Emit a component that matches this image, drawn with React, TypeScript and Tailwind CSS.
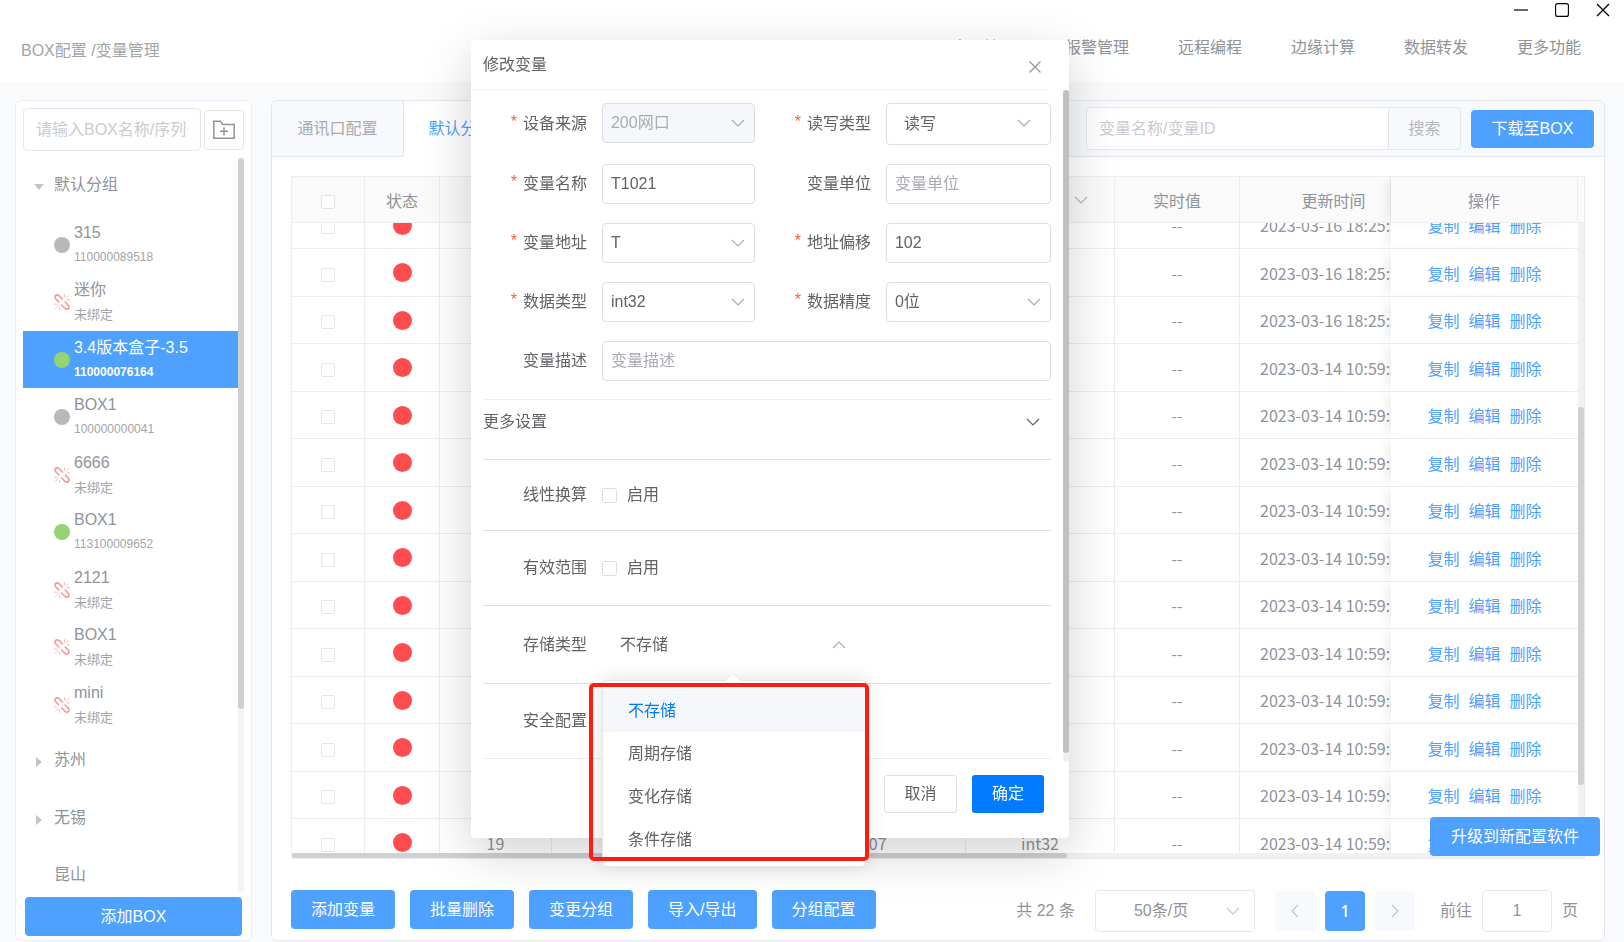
import { useLayoutEffect, useRef } from "react";

type IconProps = { className?: string };

function Chevron({ className = "" }: IconProps) {
  return (
    <svg viewBox="0 0 14 8" className={`h-2 w-3.5 pointer-events-none ${className}`} fill="none" stroke="currentColor" strokeWidth="1.2" aria-hidden="true">
      <path d="M1 1l6 6 6-6" />
    </svg>
  );
}

function FolderPlus() {
  return (
    <svg viewBox="0 0 24 20" className="h-5 w-6" fill="none" stroke="#909399" strokeWidth="1.5" aria-hidden="true">
      <path d="M1.8 18.2V1.2h6.6l2.4 3.2h11.4v13.8z" />
      <path d="M12 7.2v8M8 11.2h8" />
    </svg>
  );
}

function BrokenLink() {
  return (
    <svg viewBox="0 0 16 16" className="h-4 w-4" fill="none" stroke="#f79c9c" strokeLinecap="round" strokeLinejoin="round" aria-hidden="true">
      <path strokeWidth="1.7" d="M4.8 8L2 5.2C.6 3.8.7 2.400 1.700 1.500 2.700.7 4.200.7 5.300 1.800L8.400 5" />
      <path strokeWidth="1.7" d="M11.200 8L14 10.800c1.400 1.400 1.300 2.800.3 3.700-1 .8-2.500.8-3.600-.3L7.600 11" />
      <path strokeWidth="0.9" opacity="0.8" d="M10.500.6v2.500M14.600 1.700l-2.300 2.400M15.500 5.800h-2.300M.6 10.200h2.300M1.500 14.300l2.300-2.400M5.500 15.400v-2.300" />
    </svg>
  );
}

type Status = "off" | "on" | "unbound";
const boxes: { name: string; id: string; status: Status; active?: boolean }[] = [
  { name: "315", id: "110000089518", status: "off" },
  { name: "迷你", id: "未绑定", status: "unbound" },
  { name: "3.4版本盒子-3.5", id: "110000076164", status: "on", active: true },
  { name: "BOX1", id: "100000000041", status: "off" },
  { name: "6666", id: "未绑定", status: "unbound" },
  { name: "BOX1", id: "113100009652", status: "on" },
  { name: "2121", id: "未绑定", status: "unbound" },
  { name: "BOX1", id: "未绑定", status: "unbound" },
  { name: "mini", id: "未绑定", status: "unbound" },
];

function StatusMark({ status }: { status: Status }) {
  if (status === "unbound") return <BrokenLink />;
  return <span className={`block size-4 rounded-full ${status === "on" ? "bg-[#95d475]" : "bg-[#b8b8b8]"}`} />;
}

function Group({ name, open, leaf }: { name: string; open?: boolean; leaf?: boolean }) {
  return (
    <li className="flex h-[57px] items-center pb-[3px] odd:mb-px">
      <span className="flex w-[31px] justify-center pt-1">
        {!leaf && (
          <svg viewBox="0 0 10 10" className={`size-2.5 ${open ? "" : "-rotate-90"}`} fill="#c0c4cc" aria-hidden="true">
            <path d="M0 2h10L5 8z" />
          </svg>
        )}
      </span>
      <span>{name}</span>
    </li>
  );
}

function Sidebar() {
  return (
    <aside className="flex w-[237px] shrink-0 flex-col rounded-md border border-[#ebeef5] bg-white px-[7px] pt-[7px] pb-1">
      <div className="flex items-center gap-[3px]">
        <input
          aria-label="BOX名称"
          placeholder="请输入BOX名称/序列号"
          className="h-[43px] min-w-0 flex-1 rounded border border-[#e4e7ed] pl-3 pr-3 placeholder:text-[#c8cbd1]"
        />
        <button aria-label="新建分组" className="flex size-10 items-center justify-center rounded border border-[#e4e7ed]">
          <FolderPlus />
        </button>
      </div>
      <div className="mt-[7px] flex min-h-0 flex-1">
        <ul className="min-w-0 flex-1 overflow-hidden">
          <Group name="默认分组" open />
          {boxes.map((b, i) => (
            <li
              key={i}
              className={`flex h-[57px] items-center gap-1 pl-[31px] odd:mb-px ${b.active ? "bg-[#4ea1ff] text-white" : ""}`}
            >
              <StatusMark status={b.status} />
              <div>
                <div className="h-[25px] leading-[25px]">{b.name}</div>
                <div
                  className={`h-[25px] leading-[25px] ${b.status === "unbound" ? "text-[13px]" : "text-xs"} ${b.active ? "font-bold" : "text-[#a3a5a9]"}`}
                >
                  {b.id}
                </div>
              </div>
            </li>
          ))}
          <Group name="苏州" />
          <Group name="无锡" />
          <Group name="昆山" leaf />
        </ul>
        <div className="w-1.5 rounded-full bg-[#f4f4f4]">
          <div className="h-3/4 rounded-full bg-[#d0d0d0]" />
        </div>
      </div>
      <button className="mx-0.5 mt-[5px] h-[39px] rounded bg-[#4ea1ff] text-white">添加BOX</button>
    </aside>
  );
}

const rows = [
  { no: "6", name: "T1008", addr: "T2094", time: "2023-03-16 18:25:37" },
  { no: "7", name: "T1009", addr: "T2095", time: "2023-03-16 18:25:37" },
  { no: "8", name: "T1010", addr: "T2096", time: "2023-03-16 18:25:37" },
  { no: "9", name: "T1011", addr: "T2097", time: "2023-03-14 10:59:55" },
  { no: "10", name: "T1012", addr: "T2098", time: "2023-03-14 10:59:55" },
  { no: "11", name: "T1013", addr: "T2099", time: "2023-03-14 10:59:55" },
  { no: "12", name: "T1014", addr: "T2100", time: "2023-03-14 10:59:55" },
  { no: "13", name: "T1015", addr: "T2101", time: "2023-03-14 10:59:55" },
  { no: "14", name: "T1016", addr: "T2102", time: "2023-03-14 10:59:55" },
  { no: "15", name: "T1017", addr: "T2103", time: "2023-03-14 10:59:55" },
  { no: "16", name: "T1018", addr: "T2104", time: "2023-03-14 10:59:55" },
  { no: "17", name: "T1019", addr: "T2105", time: "2023-03-14 10:59:55" },
  { no: "18", name: "T1020", addr: "T2106", time: "2023-03-14 10:59:55" },
  { no: "19", name: "T1021", addr: "T2107", time: "2023-03-14 10:59:55" },
];

const th = "sticky top-0 z-10 h-[46px] border-b border-r border-[#ebeef0] bg-[#fafafa] p-0 font-normal";
const td = "border-b border-r border-[#ededef] p-0";
const box = "block mx-auto appearance-none size-3.5 rounded-[2px] border border-[#e2e5ec] bg-white";
const fixedShadow = "shadow-[-8px_0_10px_-4px_rgba(0,0,0,0.08)]";

function VariableTable() {
  const scroller = useRef<HTMLDivElement>(null);
  useLayoutEffect(() => {
    if (scroller.current) scroller.current.scrollTop = 21;
  }, []);
  return (
    <div className="flex min-h-0 flex-1 flex-col border border-[#ebeef0]">
      <div className="flex min-h-0 flex-1">
        <div ref={scroller} className="min-w-0 flex-1 overflow-hidden">
          <table className="w-full table-fixed border-separate border-spacing-0 text-center font-['Noto_Sans_CJK_SC',sans-serif]">
            <colgroup>
              <col className="w-[73px]" />
              <col className="w-[75px]" />
              <col className="w-[112px]" />
              <col />
              <col className="w-[203px]" />
              <col className="w-[149px]" />
              <col className="w-[125px]" />
              <col className="w-[151px]" />
              <col className="w-[187px]" />
            </colgroup>
            <thead>
              <tr>
                <th className={th}><input type="checkbox" aria-label="全选" className={`${box} mt-1`} /></th>
                <th className={th}>状态</th>
                <th className={th}>编号</th>
                <th className={th}>变量名称</th>
                <th className={th}>地址</th>
                <th className={th}>
                  <span className="flex items-center justify-center gap-[18px]">
                    数据类型 <Chevron className="text-[#b4b7bd]" />
                  </span>
                </th>
                <th className={th}>实时值</th>
                <th className={`${th} pl-[37px]`}>更新时间</th>
                <th className={`${th} ${fixedShadow}`}>操作</th>
              </tr>
            </thead>
            <tbody>
              {rows.map((r) => (
                <tr key={r.no} className="even:h-[48px] odd:h-[47px]">
                  <td className={td}><input type="checkbox" aria-label={`选择 ${r.no}`} className={`${box} mt-1`} /></td>
                  <td className={td}><span className="mx-auto block size-[19px] rounded-full bg-[#ff4d4f]" /></td>
                  <td className={td}>{r.no}</td>
                  <td className={td}>{r.name}</td>
                  <td className={td}>{r.addr}</td>
                  <td className={td}>int32</td>
                  <td className={td}>--</td>
                  <td className="overflow-hidden border-b border-[#ededef] p-0 pl-5 text-left whitespace-nowrap">{r.time}</td>
                  <td className={`relative border-b border-[#ededef] bg-white p-0 text-[#4ea1ff] ${fixedShadow}`}>
                    <span className="flex justify-center gap-[9px]">
                      <a href="#copy">复制</a>
                      <a href="#edit">编辑</a>
                      <a href="#delete">删除</a>
                    </span>
                  </td>
                </tr>
              ))}
            </tbody>
          </table>
        </div>
        <div className="flex w-1.5 flex-col">
          <div className="h-[46px] border-b border-[#ebeef0] bg-[#fafafa]" />
          <div className="flex-1 bg-[#f1f1f1] pt-[184px]">
            <div className="h-[378px] rounded-full bg-[#d0d0d0]" />
          </div>
        </div>
      </div>
      <div className="h-[5px] bg-[#f1f1f1]">
        <div className="h-full w-3/5 rounded-full bg-[#d0d0d0]" />
      </div>
    </div>
  );
}

function Main() {
  return (
    <main className="flex min-w-0 flex-1 flex-col rounded-md border border-[#e4e7ed] bg-white">
      <div className="flex h-14 items-stretch rounded-t-md bg-[#f8f9fd]">
        <button className="w-[132px] rounded-tl-md border-r border-b border-[#e4e7ed] text-[#a8abb2]">通讯口配置</button>
        <button className="w-[114px] border-r border-[#e4e7ed] bg-white text-[#4ea1ff]">默认分组</button>
        <div className="flex flex-1 items-center justify-end border-b border-[#e4e7ed] pr-2.5">
          <input
            aria-label="变量搜索"
            placeholder="变量名称/变量ID"
            className="h-[43px] w-[303px] rounded-l border border-[#e4e7ed] bg-white px-3 placeholder:text-[#c8cbd1]"
          />
          <button className="h-[43px] w-[72px] rounded-r border border-l-0 border-[#e4e7ed] text-[#b4b7bd]">搜索</button>
          <button className="ml-2.5 h-[38px] w-[123px] rounded bg-[#4ea1ff] text-white">下载至BOX</button>
        </div>
      </div>
      <div className="flex min-h-0 flex-1 flex-col px-[19px] pt-[19px] pb-[8px]">
        <VariableTable />
        <div className="mt-[31px] flex items-start justify-between text-[#909399]">
          <div className="flex gap-[15px] text-white">
            {["添加变量", "批量删除", "变更分组", "导入/导出", "分组配置"].map((t) => (
              <button key={t} className="h-[39px] rounded bg-[#4ea1ff] px-5 whitespace-nowrap">{t}</button>
            ))}
          </div>
          <div className="flex h-[42px] items-center pr-[7px]">
            <span>共 22 条</span>
            <div className="relative ml-5 w-40">
              <select aria-label="每页条数" className="h-[42px] w-full appearance-none rounded border border-[#e4e7ed] bg-white pl-[38px]">
                <option>50条/页</option>
              </select>
              <Chevron className="absolute top-[17px] right-[15px] text-[#c0c4cc]" />
            </div>
            <div className="ml-5 flex gap-2.5">
              <button aria-label="上一页" className="flex size-10 items-center justify-center rounded-sm bg-[#f8f9fd]"><Chevron className="rotate-90 text-[#c0c4cc]" /></button>
              <button className="size-10 rounded-sm bg-[#4ea1ff] font-['Noto_Sans',sans-serif] font-medium text-white">1</button>
              <button aria-label="下一页" className="flex size-10 items-center justify-center rounded-sm bg-[#f8f9fd]"><Chevron className="-rotate-90 text-[#c0c4cc]" /></button>
            </div>
            <label className="ml-[25px] flex items-center gap-2.5">
              前往
              <input defaultValue="1" className="h-[42px] w-[70px] rounded border border-[#e4e7ed] text-center" />
              页
            </label>
          </div>
        </div>
      </div>
    </main>
  );
}

const control = "w-full appearance-none rounded border border-[#dcdfe6] bg-white placeholder:text-[#a8abb2] px-2";
const label = "flex items-center justify-end pr-[15px] whitespace-nowrap";

function Star() {
  return <span className="mr-1.5 -mt-1 text-[#ff5a36]">*</span>;
}

function SelectBox({ id, value, wide, disabled }: { id: string; value: string; wide?: boolean; disabled?: boolean }) {
  return (
    <div className="relative self-start">
      <select
        id={id}
        disabled={disabled}
        className={`${control} ${wide ? "h-[42px] pl-[17px]" : "h-10"} disabled:bg-[#f5f7fa] disabled:text-[#a8abb2] disabled:opacity-100`}
      >
        <option>{value}</option>
      </select>
      <Chevron className={`absolute top-4 text-[#a8abb2] ${wide ? "right-5" : "right-2.5"}`} />
    </div>
  );
}

function CheckRow({ name, id }: { name: string; id: string }) {
  return (
    <div className="grid grid-cols-[119px_auto] items-center">
      <span className={label}>{name}</span>
      <label htmlFor={id} className="flex items-center gap-2.5">
        <input id={id} type="checkbox" className="size-[15px] appearance-none rounded-[2px] border border-[#dcdfe6] bg-white" />
        启用
      </label>
    </div>
  );
}

function StorageMenu() {
  return (
    <div className="absolute top-[640px] left-[131px] w-[264px]">
      <ul role="listbox" aria-label="存储类型选项" className="rounded border border-[#e4e7ed] bg-white pt-2 pb-[5px] shadow-[0_0_20px_rgba(0,0,0,0.13)]">
        {["不存储", "周期存储", "变化存储", "条件存储"].map((t, i) => (
          <li
            key={t}
            role="option"
            aria-selected={i === 0}
            className={`h-[43px] pl-[25px] leading-[43px] ${i === 0 ? "bg-[#f5f7fa] text-[#007bff]" : ""}`}
          >
            {t}
          </li>
        ))}
      </ul>
      <svg viewBox="0 0 18 9" className="absolute -top-2 left-[122px] h-[9px] w-[18px]" aria-hidden="true">
        <path d="M1 9l8-8 8 8" fill="#fff" stroke="#e4e7ed" strokeWidth="0.8" />
      </svg>
      <div className="absolute top-[3px] -left-[13px] h-[178px] w-[280px] rounded-[5px] border-4 border-[#ff1b10]" />
    </div>
  );
}

function EditDialog() {
  return (
    <section
      role="dialog"
      aria-label="修改变量"
      className="absolute top-10 left-[29%] w-[598px] rounded bg-white text-[#606266] shadow-[0_15px_50px_rgba(0,0,0,0.18)]"
    >
      <header className="mr-[20px] flex h-[50px] items-center justify-between border-b border-[#f2f3f5] pr-2 pl-3">
        <h2>修改变量</h2>
        <button aria-label="关闭" className="pt-1">
          <svg viewBox="0 0 12 12" className="size-3" fill="none" stroke="#909399" strokeWidth="1.1" aria-hidden="true">
            <path d="M.5.5l11 11M11.5.5l-11 11" />
          </svg>
        </button>
      </header>
      <div className="flex">
        <div className="flex-1 pl-3">
          <form className="grid grid-cols-[119px_153px_131px_165px] grid-rows-[42px_40px_40px_40px_40px] gap-y-[19px] pt-[13px]">
            <label htmlFor="device" className={label}><Star />设备来源</label>
            <SelectBox id="device" value="200网口" disabled />
            <label htmlFor="rw" className={label}><Star />读写类型</label>
            <SelectBox id="rw" value="读写" wide />

            <label htmlFor="name" className={label}><Star />变量名称</label>
            <input id="name" defaultValue="T1021" className={control} />
            <label htmlFor="unit" className={label}>变量单位</label>
            <input id="unit" placeholder="变量单位" className={control} />

            <label htmlFor="addr" className={label}><Star />变量地址</label>
            <SelectBox id="addr" value="T" />
            <label htmlFor="offset" className={label}><Star />地址偏移</label>
            <input id="offset" defaultValue="102" className={control} />

            <label htmlFor="type" className={label}><Star />数据类型</label>
            <SelectBox id="type" value="int32" />
            <label htmlFor="precision" className={label}><Star />数据精度</label>
            <SelectBox id="precision" value="0位" />

            <label htmlFor="desc" className={label}>变量描述</label>
            <div className="col-span-3 flex">
              <input id="desc" placeholder="变量描述" className={control} />
            </div>
          </form>
          <div className="mt-[18px] mr-[18px]">
            <button className="flex h-[60px] w-full items-center justify-between border-t border-[#ebeef5] pr-[11px] pb-4">
              更多设置 <Chevron />
            </button>
            <div className="grid h-[71px] border-t border-[#dcdfe6]"><CheckRow name="线性换算" id="linear" /></div>
            <div className="grid h-[75px] border-t border-[#dcdfe6]"><CheckRow name="有效范围" id="range" /></div>
            <div className="grid h-[78px] grid-cols-[119px_264px] items-center border-t border-[#dcdfe6]">
              <label htmlFor="storage" className={label}>存储类型</label>
              <div className="relative">
                <select id="storage" className="h-10 w-full appearance-none bg-white pl-[18px]">
                  <option>不存储</option>
                </select>
                <Chevron className="absolute top-4 right-5 rotate-180 text-[#a8abb2]" />
              </div>
            </div>
            <div className="grid h-[76px] grid-cols-[119px_auto] items-center border-y border-t-[#dcdfe6] border-b-[#ebeef5]">
              <span className={label}>安全配置</span>
            </div>
          </div>
        </div>
        <div className="-ml-1.5 mb-[-3px] w-1.5 rounded-full bg-[#f0f0f0]">
          <div className="h-[663px] rounded-full bg-[#c0c0c0]" />
        </div>
      </div>
      <footer className="flex justify-end gap-[15px] pt-4 pr-[25px] pb-[25px]">
        <button className="h-[38px] w-[73px] rounded-[3px] border border-[#dcdfe6]">取消</button>
        <button className="h-[38px] w-[72px] rounded-[3px] bg-[#007bff] text-white">确定</button>
      </footer>
      <StorageMenu />
    </section>
  );
}

export default function App() {
  return (
    <div className="relative flex h-screen flex-col overflow-hidden bg-[#f9fafc] font-['Liberation_Sans','Noto_Sans_CJK_SC',sans-serif] text-base text-[#909399]">
      <header className="flex h-[82px] shrink-0 flex-col bg-white">
        <div className="flex h-5 items-center justify-end gap-[27px] pr-[14px] text-black">
          <svg viewBox="0 0 14 14" className="size-3.5" stroke="currentColor" strokeWidth="1.2" aria-hidden="true"><path d="M0 7h14" /></svg>
          <svg viewBox="0 0 14 14" className="size-3.5" fill="none" stroke="currentColor" strokeWidth="1.1" aria-hidden="true"><rect x=".6" y=".6" width="12.8" height="12.8" rx="2" /></svg>
          <svg viewBox="0 0 14 14" className="size-3.5" fill="none" stroke="currentColor" strokeWidth="1.3" aria-hidden="true"><path d="M1 1l12 12M13 1L1 13" /></svg>
        </div>
        <div className="flex flex-1 items-start justify-between pl-[21px] pr-[43px]">
          <h1 className="pt-[19px] text-[#a3a5a9]">BOX配置 /变量管理</h1>
          <nav className="flex gap-[49px] pt-4">
            <a href="#vars" className="text-[#4ea1ff]">变量管理</a>
            <a href="#alarm">报警管理</a>
            <a href="#remote">远程编程</a>
            <a href="#edge">边缘计算</a>
            <a href="#forward">数据转发</a>
            <a href="#more">更多功能</a>
          </nav>
        </div>
      </header>
      <div className="flex min-h-0 flex-1 gap-[19px] pt-[18px] pr-[19px] pb-px pl-[15px]">
        <Sidebar />
        <Main />
      </div>
      <button className="absolute right-6 bottom-[86px] z-10 h-[39px] rounded bg-[#4ea1ff] px-[21px] text-white">升级到新配置软件</button>
      <div className="absolute inset-0 z-20">
        <EditDialog />
      </div>
    </div>
  );
}
